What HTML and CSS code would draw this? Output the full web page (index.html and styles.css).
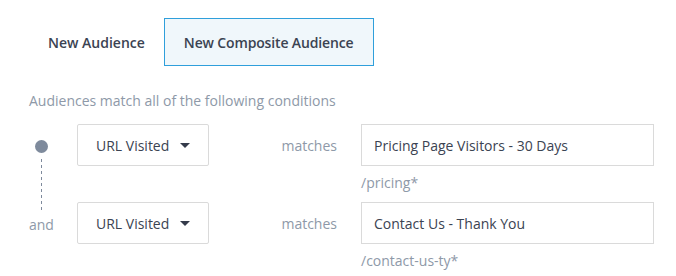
FILE: index.html
```html
<!DOCTYPE html>
<html>

<head>
    <meta http-equiv="Content-Type" content="text/html; charset=utf-8" />
    <link rel="stylesheet" href="styles.css">
</head>

<body>

    <div class="container">
        <div class="Tab-Row">
            <div class="Tab">New Audience</div>
            <div class="Tab Tab-Active">New Composite Audience</div>
        </div>

        <div class="Intro">Audiences match all of the following conditions</div>

        <div class="Conditions">
            <div class="Connector">
                <span class="Dot"></span>
                <span class="Line"></span>
            </div>
            <div class="Select">URL Visited <span class="Caret"></span></div>
            <div class="Match">matches</div>
            <div class="Input">Pricing Page Visitors - 30 Days</div>
            <div class="Hint">/pricing*</div>

            <div class="And">and</div>
            <div class="Select">URL Visited <span class="Caret"></span></div>
            <div class="Match">matches</div>
            <div class="Input">Contact Us - Thank You</div>
            <div class="Hint">/contact-us-ty*</div>
        </div>
    </div>

</body>

</html>
```

FILE: styles.css
```css
body {
    margin: 0;
    background-color: #ffffff;
    font-family: "Open Sans", "Liberation Sans", sans-serif;
    font-size: 14px;
    color: #3b4352;
}

.container {
    padding: 18px 0 0 29px;
}

.Tab-Row {
    display: flex;
}

.Tab {
    height: 48px;
    box-sizing: border-box;
    padding: 0 18px;
    display: flex;
    align-items: center;
    font-weight: 600;
    border: 1px solid transparent;
}

.Tab-Active {
    padding: 0 20px 0 19px;
    letter-spacing: -0.15px;
    background-color: #f0f7fb;
    border-color: #2f9fdb;
}

.Intro {
    margin-top: 25px;
    line-height: 20px;
    color: #8e99a8;
}

.Conditions {
    display: grid;
    grid-template-columns: 48px 132px 152px 293px;
    grid-template-rows: 42px 36px 42px 36px;
    margin-top: 13px;
}

.Connector {
    grid-row: 1 / 3;
    display: flex;
    flex-direction: column;
    align-items: flex-start;
}

.Dot {
    width: 13px;
    height: 13px;
    margin: 16px 0 0 6px;
    border-radius: 50%;
    background-color: #7e8a9c;
}

/* dashed link down to the next condition */
.Line {
    flex: 1;
    width: 1px;
    margin: 6px 0 -8px 12px;
    background: repeating-linear-gradient(to bottom, #7e8a9c 0, #7e8a9c 3px, transparent 3px, transparent 6px);
}

.And {
    display: flex;
    align-items: center;
    padding-top: 3px;
    color: #8e99a8;
}

.Select {
    box-sizing: border-box;
    border: 1px solid #dadada;
    border-radius: 2px;
    display: flex;
    align-items: center;
    padding: 0 0 0 18px;
    color: #3b4352;
}

.Caret {
    width: 0;
    height: 0;
    margin-left: 11px;
    border-left: 5px solid transparent;
    border-right: 5px solid transparent;
    border-top: 5px solid #343b4a;
}

.Match {
    display: flex;
    align-items: center;
    justify-content: flex-end;
    padding-right: 24px;
    color: #8e99a8;
}

.Input {
    box-sizing: border-box;
    border: 1px solid #dadada;
    display: flex;
    align-items: center;
    padding-left: 12px;
}

.Hint {
    grid-column: 4;
    padding-top: 7px;
    line-height: 20px;
    color: #8e99a8;
}
```
